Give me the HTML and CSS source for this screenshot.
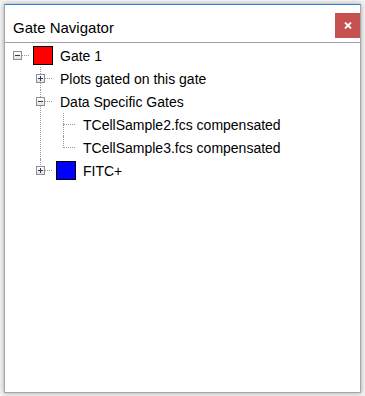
FILE: index.html
```html
<!DOCTYPE html>
<html>
<head>
<meta charset="utf-8">
<link rel="stylesheet" href="styles.css">
</head>
<body>
<div class="window">
  <div class="header">
    <div class="title">Gate Navigator</div>
    <button class="close" aria-label="Close">
      <svg width="8" height="7" viewBox="0 0 8 7"><path d="M1 0.5 L7 6.5 M7 0.5 L1 6.5" stroke="#fff" stroke-width="1.8" fill="none"/></svg>
    </button>
  </div>
  <div class="panel">
    <ul class="tree">
      <li class="root">
        <div class="row"><span class="exp minus"></span><span class="swatch red"></span><span class="label">Gate 1</span></div>
        <ul>
          <li>
            <div class="row"><span class="exp plus"></span><span class="label">Plots gated on this gate</span></div>
          </li>
          <li>
            <div class="row"><span class="exp minus"></span><span class="label">Data Specific Gates</span></div>
            <ul>
              <li><div class="row"><span class="slot"></span><span class="label">TCellSample2.fcs compensated</span></div></li>
              <li class="last"><div class="row"><span class="slot"></span><span class="label">TCellSample3.fcs compensated</span></div></li>
            </ul>
          </li>
          <li class="last">
            <div class="row"><span class="exp plus"></span><span class="swatch blue"></span><span class="label">FITC+</span></div>
          </li>
        </ul>
      </li>
    </ul>
  </div>
</div>
</body>
</html>
```

FILE: styles.css
```css
html, body {
  margin: 0;
  padding: 0;
}
body {
  background: #f4f4f4;
  width: 365px;
  height: 396px;
  overflow: hidden;
  padding: 4px 0 0 4px;
  box-sizing: border-box;
  font-family: "Liberation Sans", Arial, sans-serif;
}
.window {
  width: 357px;
  height: 389px;
  box-sizing: border-box;
  background: #fff;
  border: 1px solid #a6a6a6;
  border-top: 1px solid #2b7fd6;
  box-shadow: 0 0 5px rgba(0, 0, 0, 0.35);
  display: flex;
  flex-direction: column;
}
.header {
  height: 37px;
  display: flex;
  align-items: flex-start;
  justify-content: space-between;
  flex: none;
}
.title {
  font-size: 15px;
  color: #000;
  margin-left: 8px;
  margin-top: 15px;
  line-height: 15px;
}
.close {
  width: 25px;
  height: 25px;
  margin-top: 8px;
  border: 0;
  padding: 0;
  background: #c75050;
  display: flex;
  align-items: center;
  justify-content: center;
}
.panel {
  flex: 1;
  border-top: 1px solid #a0a0a0;
  padding-top: 1px;
}
.tree, .tree ul {
  list-style: none;
  margin: 0;
  padding: 0;
}
.tree {
  padding-left: 8px;
}
.tree ul {
  padding-left: 23px;
}
.tree li {
  position: relative;
}
.tree li::before {
  content: "";
  position: absolute;
  left: 4px;
  top: 11px;
  width: 12px;
  border-top: 1px dotted #9a9a9a;
}
.tree li::after {
  content: "";
  position: absolute;
  left: 4px;
  top: 0;
  bottom: 0;
  border-left: 1px dotted #9a9a9a;
}
.tree li.last::after {
  bottom: auto;
  height: 12px;
}
.tree li.root::after {
  display: none;
}
.row {
  height: 23px;
  display: flex;
  align-items: center;
  position: relative;
}
.slot {
  width: 9px;
  height: 9px;
  flex: none;
}
.exp {
  width: 9px;
  height: 9px;
  box-sizing: border-box;
  border: 1px solid #8f8f8f;
  background: linear-gradient(#ffffff, #e2e2e2);
  position: relative;
  z-index: 1;
  flex: none;
}
.exp::before {
  content: "";
  position: absolute;
  left: 1px;
  top: 3px;
  width: 5px;
  height: 1px;
  background: #1f3f66;
}
.exp.plus::after {
  content: "";
  position: absolute;
  left: 3px;
  top: 1px;
  width: 1px;
  height: 5px;
  background: #1f3f66;
}
.swatch {
  width: 20px;
  height: 19px;
  box-sizing: border-box;
  border: 1px solid #000;
  margin-left: 11px;
  position: relative;
  z-index: 1;
  flex: none;
}
.swatch.red { background: #ff0000; }
.swatch.blue { background: #0000ff; }
.label {
  font-size: 14px;
  color: #000;
  margin-left: 15px;
  white-space: nowrap;
  background: #fff;
  position: relative;
  z-index: 1;
}
.swatch + .label {
  margin-left: 7px;
}
```
